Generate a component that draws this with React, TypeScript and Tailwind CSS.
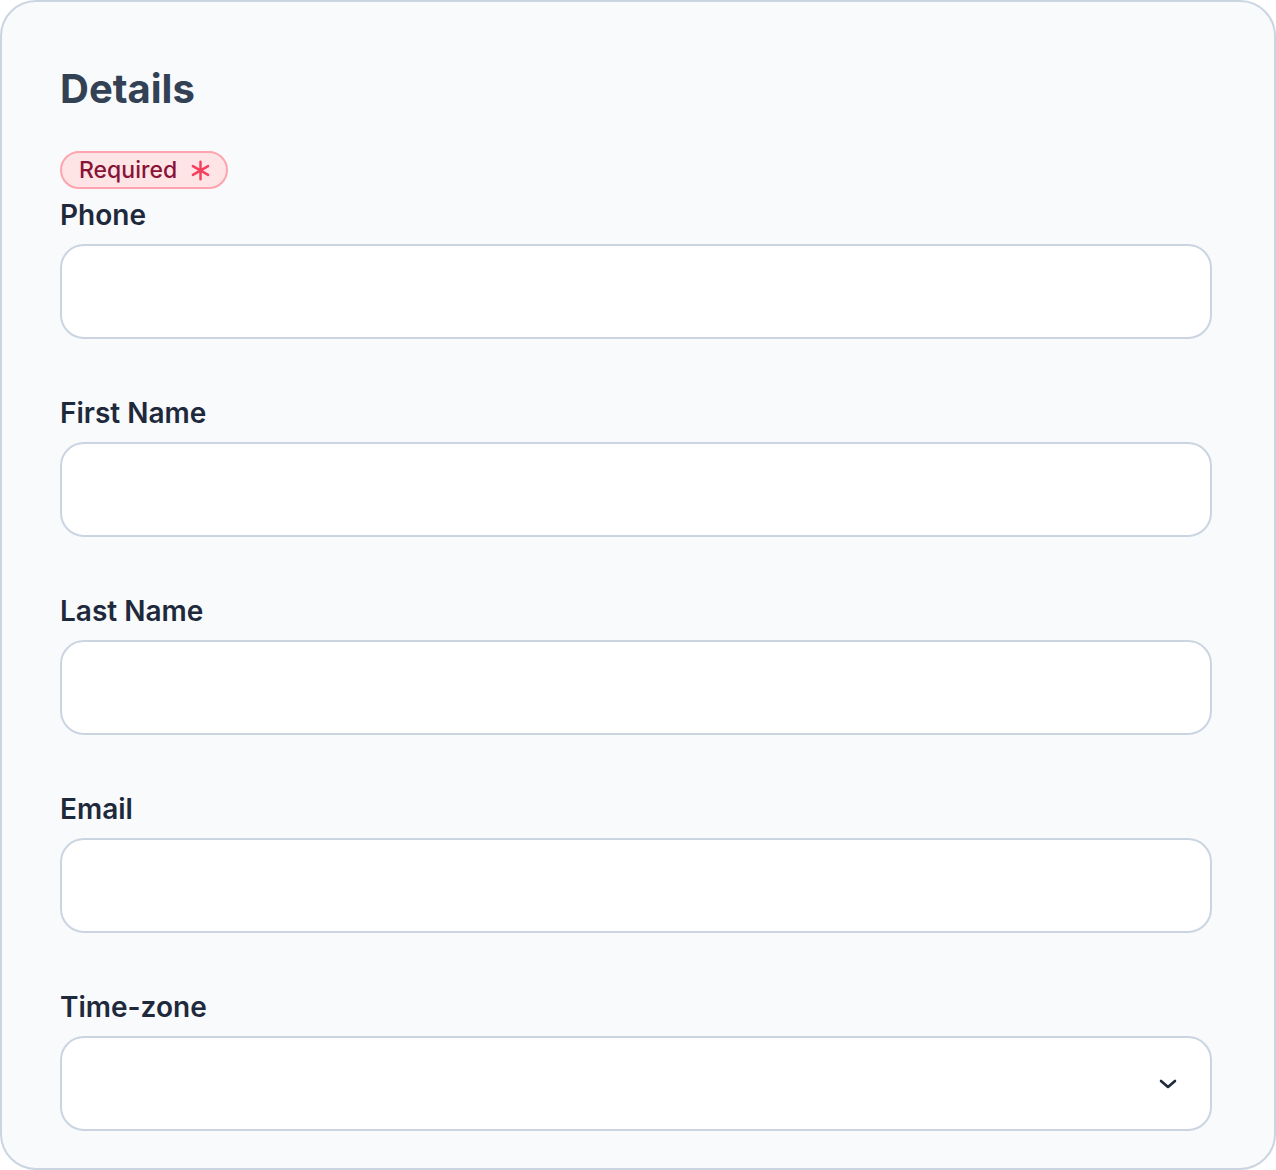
import React from 'react';

const fields = ['Phone', 'First Name', 'Last Name', 'Email'];

const Label: React.FC<{ text: string }> = ({ text }) => (
  <label className="block text-[28px] leading-[36px] font-semibold text-[#1e293b]">{text}</label>
);

const App: React.FC = () => {
  return (
    <div
      className="w-[1276px] h-[1170px] bg-[#f8fafc] border-2 border-[#cbd5e1] rounded-[36px] pl-[58px] pr-[62px] pt-[63px] pb-[37px] flex flex-col"
      style={{ fontFamily: 'Inter, "Noto Sans", sans-serif' }}
    >
      <h1 className="text-[40px] leading-[48px] font-bold text-[#334155]">Details</h1>

      {/* Required badge */}
      <div className="mt-[38px] self-start h-[38px] pl-[17px] pr-[15px] rounded-full border-2 border-[#fda4af] bg-[#ffe4e6] flex items-center gap-[13px]">
        <span className="text-[23px] leading-none font-medium text-[#881337]">Required</span>
        <svg width="21" height="21" viewBox="0 0 24 24" fill="none" stroke="#f43f5e" strokeWidth="2.8" strokeLinecap="round">
          <path d="M12 2v20M3.3 7l17.4 10M3.3 17L20.7 7" />
        </svg>
      </div>

      <div className="mt-[8px] flex flex-col gap-[56px]">
        {fields.map((f) => (
          <div key={f} className="flex flex-col gap-[11px]">
            <Label text={f} />
            <input className="h-[95px] w-full bg-white border-2 border-[#cbd5e1] rounded-[24px] px-6 text-[28px] outline-none" />
          </div>
        ))}
        <div className="flex flex-col gap-[11px]">
          <Label text="Time-zone" />
          <div className="h-[95px] w-full bg-white border-2 border-[#cbd5e1] rounded-[24px] px-6 flex items-center justify-end pr-[32px]">
            <svg width="20" height="12" viewBox="0 0 20 12" fill="none" stroke="#1e293b" strokeWidth="2.6" strokeLinecap="round" strokeLinejoin="round">
              <path d="M3 3l7 6 7-6" />
            </svg>
          </div>
        </div>
      </div>
    </div>
  );
};

export default App;
